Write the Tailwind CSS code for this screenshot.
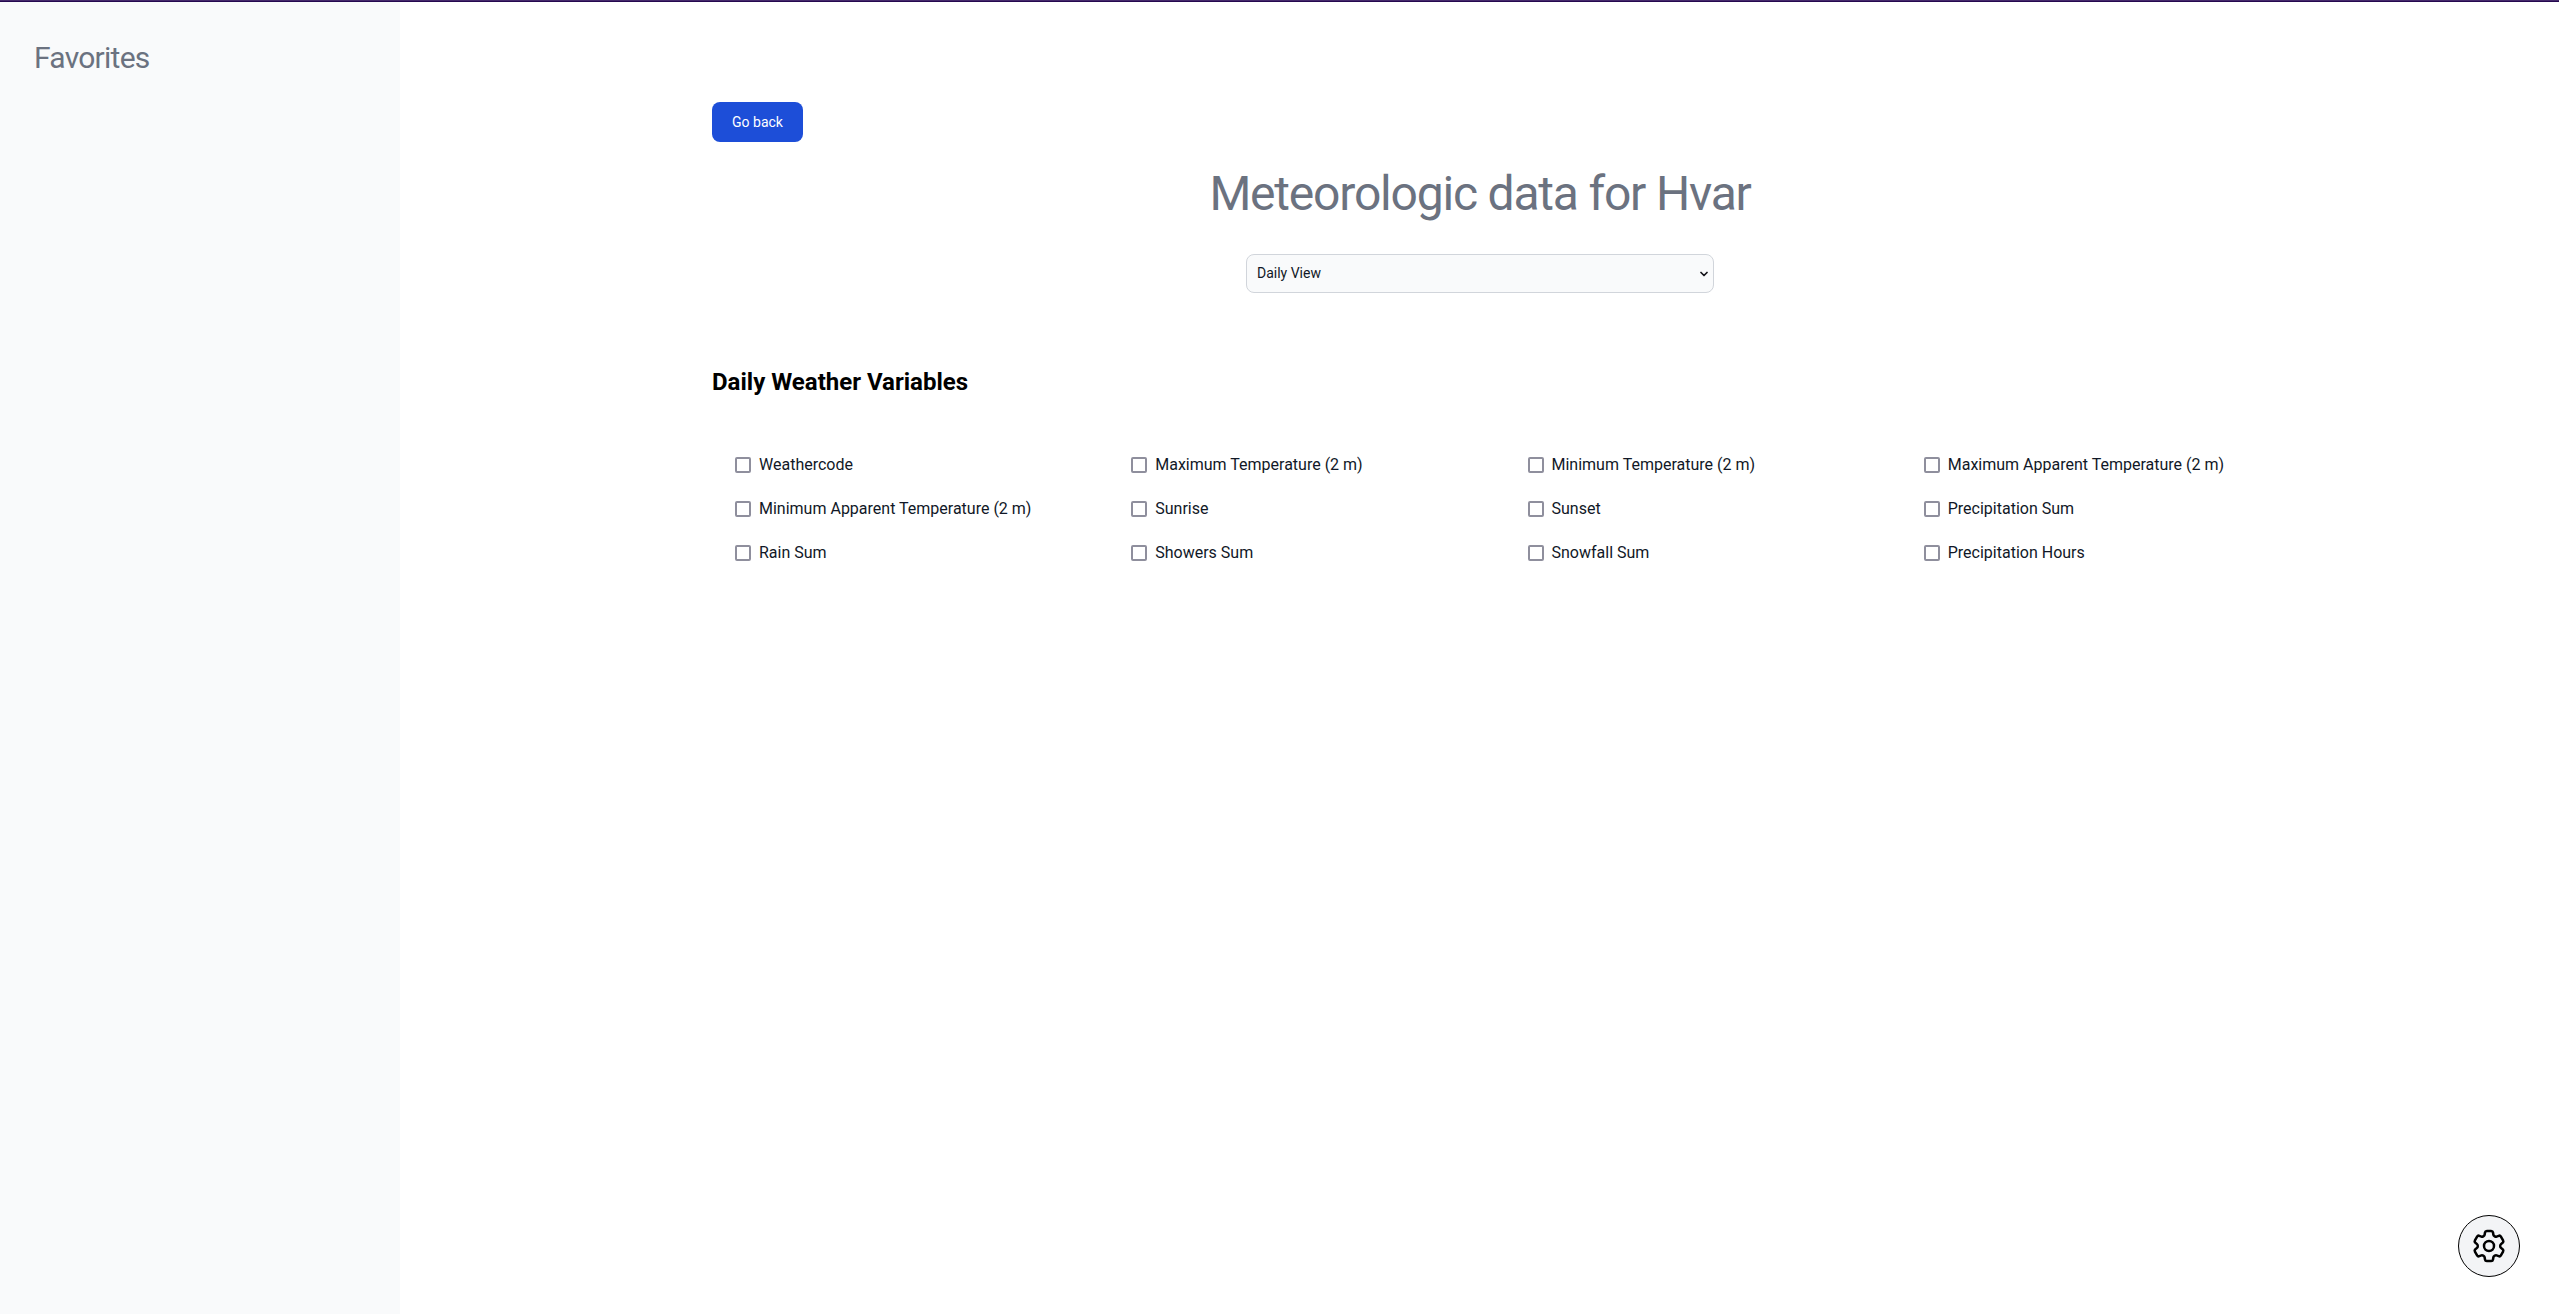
<!DOCTYPE html>
<html lang="en">
<head>
<meta charset="utf-8">
<title>Meteorologic data</title>
<script src="https://cdn.jsdelivr.net/npm/@tailwindcss/browser@4"></script>
</head>
<body class="flex min-h-screen flex-col border-t border-[#452a6b] bg-white font-['Roboto',sans-serif] text-[#111827]">
<div class="flex grow border-t border-[#25084f]">
  <aside class="w-[400px] shrink-0 bg-[#f9fafb] px-[34px] py-[38px]">
    <h2 class="text-3xl tracking-tight text-[#6b7280]">Favorites</h2>
  </aside>
  <main class="grow pt-[100px] pr-6 pl-[25px]">
    <div class="mx-auto max-w-[1536px]">
      <button type="button" class="block h-10 min-w-[91px] rounded-lg bg-[#1d4ed8] px-5 text-sm text-white">Go back</button>
      <h1 class="mt-7 text-center text-5xl tracking-tight text-[#6b7280]">Meteorologic data for Hvar</h1>
      <div class="relative mx-auto mt-9 w-[468px]">
        <select aria-label="View" class="block h-[39px] w-full appearance-none rounded-lg border border-[#d1d5db] bg-[#f9fafb] px-[10px] pb-0.5 text-sm">
          <option>Daily View</option>
          <option>Hourly View</option>
        </select>
        <svg class="pointer-events-none absolute top-4 right-[6px] h-2 w-2" viewBox="0 0 8 8" fill="none" stroke="#15141a" stroke-width="1.7" stroke-linecap="round" stroke-linejoin="round"><path d="M1 2.5l3 3 3-3"/></svg>
      </div>
      <h2 class="mt-[73px] text-2xl font-bold text-black">Daily Weather Variables</h2>
      <div class="mt-[55px] grid grid-cols-4 gap-x-[49px] gap-y-5 whitespace-nowrap">
        <label class="flex items-center gap-2 pl-[23px]"><input type="checkbox" class="size-4 appearance-none rounded-xs border-2 border-[#8f8f9d] bg-white">Weathercode</label>
        <label class="flex items-center gap-2 pl-[23px]"><input type="checkbox" class="size-4 appearance-none rounded-xs border-2 border-[#8f8f9d] bg-white">Maximum Temperature (2 m)</label>
        <label class="flex items-center gap-2 pl-[23px]"><input type="checkbox" class="size-4 appearance-none rounded-xs border-2 border-[#8f8f9d] bg-white">Minimum Temperature (2 m)</label>
        <label class="flex items-center gap-2 pl-[23px]"><input type="checkbox" class="size-4 appearance-none rounded-xs border-2 border-[#8f8f9d] bg-white">Maximum Apparent Temperature (2 m)</label>
        <label class="flex items-center gap-2 pl-[23px]"><input type="checkbox" class="size-4 appearance-none rounded-xs border-2 border-[#8f8f9d] bg-white">Minimum Apparent Temperature (2 m)</label>
        <label class="flex items-center gap-2 pl-[23px]"><input type="checkbox" class="size-4 appearance-none rounded-xs border-2 border-[#8f8f9d] bg-white">Sunrise</label>
        <label class="flex items-center gap-2 pl-[23px]"><input type="checkbox" class="size-4 appearance-none rounded-xs border-2 border-[#8f8f9d] bg-white">Sunset</label>
        <label class="flex items-center gap-2 pl-[23px]"><input type="checkbox" class="size-4 appearance-none rounded-xs border-2 border-[#8f8f9d] bg-white">Precipitation Sum</label>
        <label class="flex items-center gap-2 pl-[23px]"><input type="checkbox" class="size-4 appearance-none rounded-xs border-2 border-[#8f8f9d] bg-white">Rain Sum</label>
        <label class="flex items-center gap-2 pl-[23px]"><input type="checkbox" class="size-4 appearance-none rounded-xs border-2 border-[#8f8f9d] bg-white">Showers Sum</label>
        <label class="flex items-center gap-2 pl-[23px]"><input type="checkbox" class="size-4 appearance-none rounded-xs border-2 border-[#8f8f9d] bg-white">Snowfall Sum</label>
        <label class="flex items-center gap-2 pl-[23px]"><input type="checkbox" class="size-4 appearance-none rounded-xs border-2 border-[#8f8f9d] bg-white">Precipitation Hours</label>
      </div>
    </div>
  </main>
</div>
<button type="button" aria-label="Settings" class="fixed right-[39px] bottom-[37px] flex size-[62px] items-center justify-center rounded-full border border-black bg-[#f3f4f6] text-black">
  <svg class="size-10" viewBox="0 0 24 24" fill="none" stroke="currentColor" stroke-width="1.5" stroke-linecap="round" stroke-linejoin="round"><path d="M9.594 3.94c.09-.542.56-.94 1.11-.94h2.593c.55 0 1.02.398 1.11.94l.213 1.281c.063.374.313.686.645.87.074.04.147.083.22.127.324.196.72.257 1.075.124l1.217-.456a1.125 1.125 0 011.37.49l1.296 2.247a1.125 1.125 0 01-.26 1.431l-1.003.827c-.293.24-.438.613-.431.992a6.759 6.759 0 010 .255c-.007.378.138.75.43.99l1.005.828c.424.35.534.954.26 1.43l-1.298 2.247a1.125 1.125 0 01-1.369.491l-1.217-.456c-.355-.133-.75-.072-1.076.124a6.57 6.57 0 01-.22.128c-.331.183-.581.495-.644.869l-.213 1.28c-.09.543-.56.941-1.11.941h-2.594c-.55 0-1.02-.398-1.11-.94l-.213-1.281c-.062-.374-.312-.686-.644-.87a6.52 6.52 0 01-.22-.127c-.325-.196-.72-.257-1.076-.124l-1.217.456a1.125 1.125 0 01-1.369-.49l-1.297-2.247a1.125 1.125 0 01.26-1.431l1.004-.827c.292-.24.437-.613.43-.992a6.932 6.932 0 010-.255c.007-.378-.138-.75-.43-.99l-1.004-.828a1.125 1.125 0 01-.26-1.43l1.297-2.247a1.125 1.125 0 011.37-.491l1.216.456c.356.133.751.072 1.076-.124.072-.044.146-.087.22-.128.332-.183.582-.495.644-.869l.214-1.281z"/><path d="M15 12a3 3 0 11-6 0 3 3 0 016 0z"/></svg>
</button>
</body>
</html>
